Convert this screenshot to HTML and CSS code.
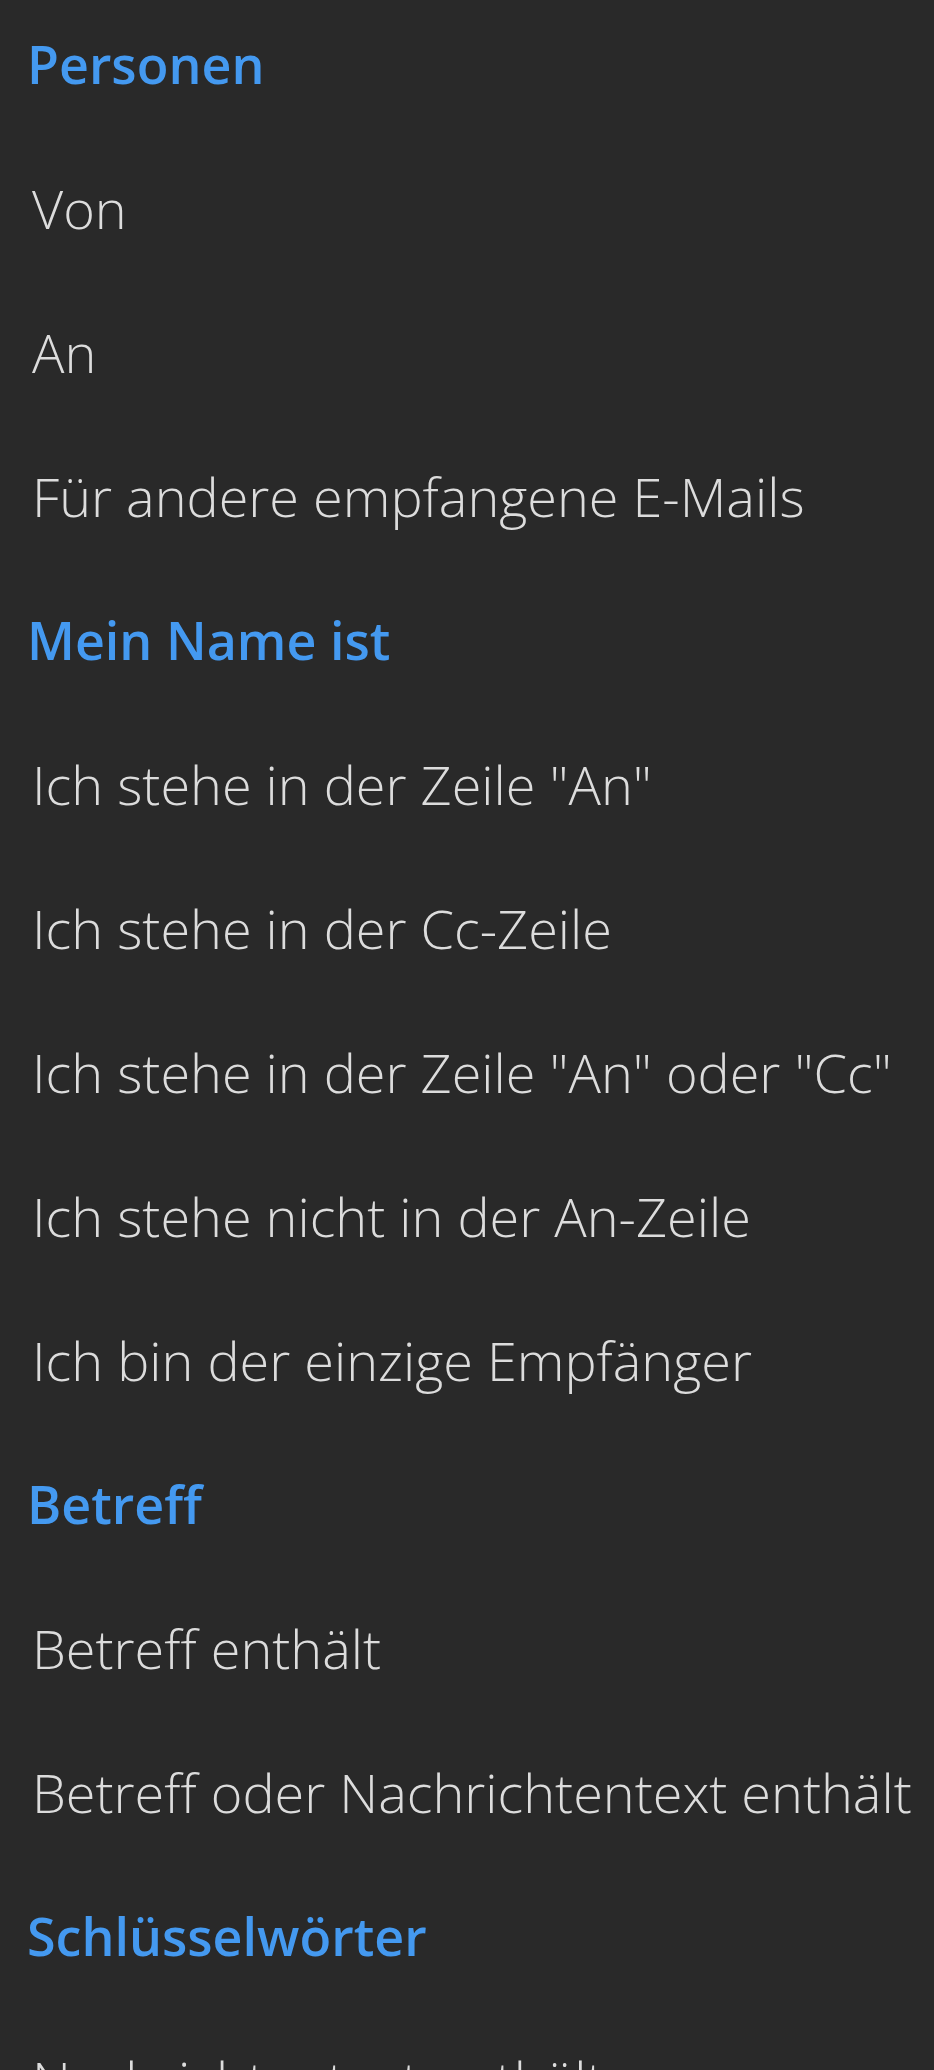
FILE: index.html
```html
<!DOCTYPE html>
<html lang="de">
<head>
    <meta charset="UTF-8">
    <meta name="viewport" content="width=device-width, initial-scale=1.0">
    <title>Bedingung hinzufügen</title>
    <link rel="stylesheet" href="styles.css">
</head>
<body>
    <ul class="condition-list">
        <li class="group-title">Personen</li>
        <li class="option">Von</li>
        <li class="option">An</li>
        <li class="option">Für andere empfangene E-Mails</li>

        <li class="group-title">Mein Name ist</li>
        <li class="option">Ich stehe in der Zeile "An"</li>
        <li class="option">Ich stehe in der Cc-Zeile</li>
        <li class="option">Ich stehe in der Zeile "An" oder "Cc"</li>
        <li class="option">Ich stehe nicht in der An-Zeile</li>
        <li class="option">Ich bin der einzige Empfänger</li>

        <li class="group-title">Betreff</li>
        <li class="option">Betreff enthält</li>
        <li class="option">Betreff oder Nachrichtentext enthält</li>

        <li class="group-title">Schlüsselwörter</li>
        <li class="option">Nachrichtentext enthält</li>
    </ul>
</body>
</html>
```

FILE: styles.css
```css
        body {
            font-family: "Open Sans", "Noto Sans", sans-serif;
            background-color: #292929;
            margin: 0;
            padding: 0;
            overflow: hidden;
        }

        .condition-list {
            list-style: none;
            margin: 0;
            padding: 0;
        }

        .condition-list li {
            height: 128px;
            line-height: 128px;
            padding-bottom: 16px;
            white-space: nowrap;
        }

        .group-title {
            padding-left: 27px;
            font-size: 52px;
            font-weight: 600;
            color: #4499f0;
        }

        .option {
            padding-left: 32px;
            font-size: 54px;
            font-weight: 300;
            color: #dcdcdc;
            cursor: pointer;
        }
```
